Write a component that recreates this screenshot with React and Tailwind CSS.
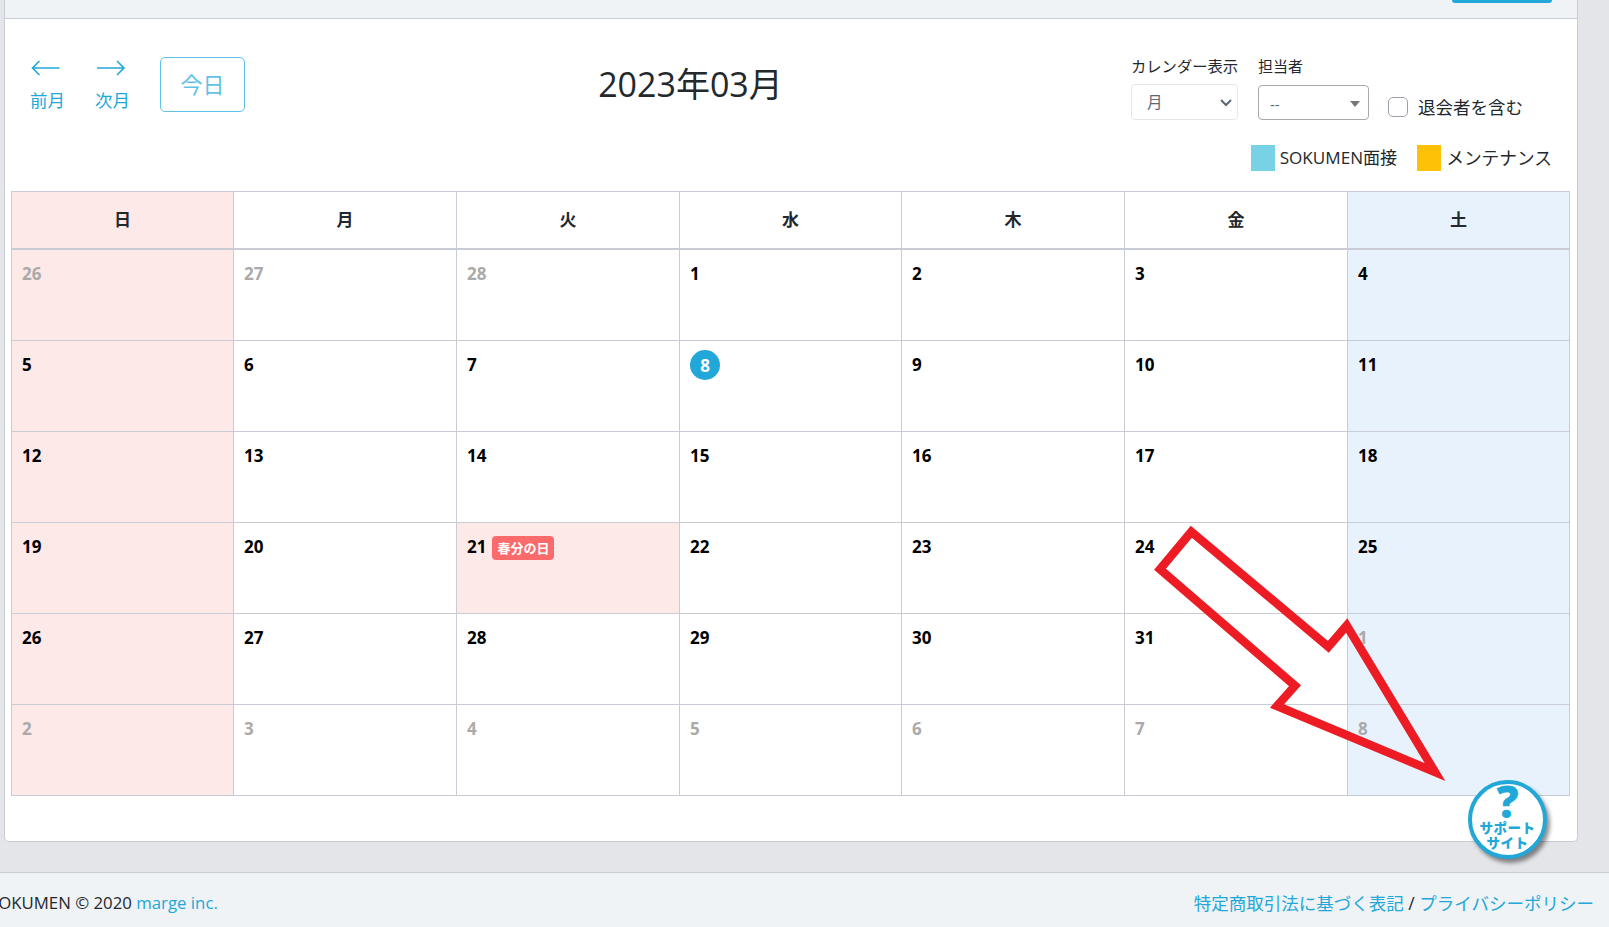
import React from 'react';

const FONT = "font-['Open_Sans','Noto_Sans_CJK_JP',sans-serif]";

const WEEK = ['日', '月', '火', '水', '木', '金', '土'];

// column widths land on the same border positions as the reference
const COLS = 'grid grid-cols-[222px_223px_223px_222px_223px_223px_222px]';

// [day, in this month]
const DAYS = [
    [26, 0], [27, 0], [28, 0], [1, 1], [2, 1], [3, 1], [4, 1],
    [5, 1], [6, 1], [7, 1], [8, 1], [9, 1], [10, 1], [11, 1],
    [12, 1], [13, 1], [14, 1], [15, 1], [16, 1], [17, 1], [18, 1],
    [19, 1], [20, 1], [21, 1], [22, 1], [23, 1], [24, 1], [25, 1],
    [26, 1], [27, 1], [28, 1], [29, 1], [30, 1], [31, 1], [1, 0],
    [2, 0], [3, 0], [4, 0], [5, 0], [6, 0], [7, 0], [8, 0],
];

const colBg = (i) => {
    if (i % 7 === 0) return 'bg-[#fde9e8]';
    if (i % 7 === 6) return 'bg-[#e7f2fd]';
    return 'bg-white';
};

const NavArrow = ({ dir, label }) => (
    <div className="flex w-[65px] flex-col items-start">
        <svg width="30" height="16" viewBox="0 0 30 16" fill="none" stroke="#22a8d8" strokeWidth="1.6" className="ml-[1px]">
            {dir === 'left' ? <path d="M28.5 8H2M8.5 1L1.5 8l7 7" /> : <path d="M1 8h26.5M21 1l7 7-7 7" />}
        </svg>
        <span className="mt-[11px] text-[17.5px] leading-[26px] text-[#22a8d8]">{label}</span>
    </div>
);

const Cell = ({ day, current, index }) => {
    const isToday = current && day === 8;
    const isHoliday = current && day === 21;
    const bg = isHoliday ? 'bg-[#fde9e8]' : colBg(index);
    return (
        <div className={`h-[91px] border-r border-b border-[#c9ccd5] pl-[10px] pt-[11px] ${bg}`}>
            {isToday ? (
                <span className="mt-[-2px] flex h-[30px] w-[30px] items-center justify-center rounded-full bg-[#22a8d8] text-[17px] leading-none font-bold text-white">{day}</span>
            ) : (
                <div className="flex items-start">
                    <span className={`text-[17px] leading-[26px] font-bold ${current ? 'text-black' : 'text-[#aaaaaa]'}`}>{day}</span>
                    {isHoliday && (
                        <span className="ml-[6px] mt-[2px] rounded-[4px] bg-[#fb6b6b] px-[5px] text-[13px] leading-[24px] font-bold text-white">春分の日</span>
                    )}
                </div>
            )}
        </div>
    );
};

const SupportButton = () => (
    <div className="absolute left-[1468px] top-[780px] flex h-[79px] w-[79px] flex-col items-center rounded-full border-[4px] border-[#22a8d8] bg-white shadow-[3px_4px_4px_rgba(0,0,0,0.45)]">
        <span className="mt-[1px] text-[44px] leading-[32px] font-extrabold text-[#22a8d8]">?</span>
        <span className="mt-[4px] text-center text-[13.5px] leading-[14.5px] font-extrabold tracking-[0.5px] text-[#22a8d8]">サポート<br />サイト</span>
    </div>
);

const App = () => {
    return (
        <div className={`relative flex h-[927px] w-[1609px] flex-col overflow-hidden bg-[#e4e5e8] text-[#23282c] ${FONT}`}>
            <div className="h-[872px] shrink-0 pl-[4px] pr-[31px]">
                <div className="h-[842px] rounded-b-[5px] border-x border-b border-[#c9ccd5] bg-white">
                    {/* page header, cut off by the scroll position */}
                    <div className="flex h-[19px] justify-end border-b border-[#c9ccd5] bg-[#eff3f6] pr-[25px]">
                        <div className="h-[3px] w-[100px] rounded-b-[3px] bg-[#22a8d8]" />
                    </div>

                    <div className="flex h-[172px] pl-[25px] pr-[25px]">
                        <div className="flex w-[220px] items-start pt-[41px]">
                            <NavArrow dir="left" label="前月" />
                            <NavArrow dir="right" label="次月" />
                            <button className="mt-[-3px] h-[55px] w-[85px] rounded-[5px] border border-[#62c2e6] text-[22px] text-[#62c2e6]">今日</button>
                        </div>

                        <div className="flex-1 pt-[41px] text-center">
                            <h1 className="text-[34px] leading-[48px] font-normal text-[#23282c]">2023年03月</h1>
                        </div>

                        <div className="flex w-[421px] flex-col items-end pt-[35px]">
                            <div className="flex w-full items-start">
                                <div className="w-[107px]">
                                    <div className="mb-[6px] text-[15.3px] leading-[24px] whitespace-nowrap">カレンダー表示</div>
                                    <div className="relative h-[36px] rounded-[4px] border border-[#e4e7ea] pl-[15px] text-[15.5px] leading-[34px] text-[#5c6873]">
                                        月
                                        <svg width="12" height="8" viewBox="0 0 12 8" fill="none" stroke="#5c6873" strokeWidth="2" className="absolute right-[5px] top-[14px]">
                                            <path d="M1 1l5 5 5-5" />
                                        </svg>
                                    </div>
                                </div>
                                <div className="ml-[20px] w-[111px]">
                                    <div className="mb-[7px] text-[15px] leading-[24px]">担当者</div>
                                    <div className="relative h-[35px] rounded-[4px] border border-[#a9a9a9] pl-[11px] text-[15px] leading-[36px] text-[#5c6873]">
                                        --
                                        <span className="absolute right-[8px] top-[15px] h-0 w-0 border-x-[5px] border-t-[6px] border-x-transparent border-t-[#777777]" />
                                    </div>
                                </div>
                                <label className="ml-[19px] mt-[40px] flex items-center">
                                    <span className="h-[20px] w-[20px] rounded-[5px] border border-[#9aa1a8] bg-white" />
                                    <span className="ml-[10px] text-[17.5px] leading-[26px] whitespace-nowrap">退会者を含む</span>
                                </label>
                            </div>
                            <div className="mt-[25px] flex items-center">
                                <span className="h-[26px] w-[24px] bg-[#77d2e6]" />
                                <span className="ml-[5px] text-[17.1px] leading-[26px]">SOKUMEN面接</span>
                                <span className="ml-[20px] h-[26px] w-[24px] bg-[#ffc107]" />
                                <span className="ml-[5px] text-[17.7px] leading-[26px]">メンテナンス</span>
                            </div>
                        </div>
                    </div>

                    {/* calendar */}
                    <div className="ml-[6px] w-[1559px] border-l border-t border-[#c9ccd5]">
                        <div className={COLS}>
                            {WEEK.map((w, i) => (
                                <div key={w} className={`flex h-[58px] items-center justify-center border-r border-b-2 border-[#c9ccd5] text-[17px] font-bold ${colBg(i)}`}>{w}</div>
                            ))}
                        </div>
                        <div className={COLS}>
                            {DAYS.map(([day, current], i) => (
                                <Cell key={i} day={day} current={!!current} index={i} />
                            ))}
                        </div>
                    </div>
                </div>
            </div>

            <footer className="flex flex-1 items-center justify-between border-t border-[#c9ccd5] bg-[#eff3f6] pr-[15px] pt-[6px] text-[17.5px]">
                <div className="ml-[-11px] text-[16.8px]">SOKUMEN © 2020 <span className="text-[#22a8d8]">marge inc.</span></div>
                <div><span className="text-[#22a8d8]">特定商取引法に基づく表記</span> / <span className="text-[#22a8d8]">プライバシーポリシー</span></div>
            </footer>

            {/* annotation arrow drawn on top of the screenshot */}
            <svg className="pointer-events-none absolute left-0 top-0" width="1609" height="927" fill="none">
                <path d="M1191.3 531.7L1160 569.3L1295 685.7L1277 706L1435 772L1346.7 625.5L1328.3 646.7Z" stroke="#ed1c24" strokeWidth="8.5" strokeLinejoin="miter" strokeMiterlimit="10" />
            </svg>

            <SupportButton />
        </div>
    );
};

export default App;
